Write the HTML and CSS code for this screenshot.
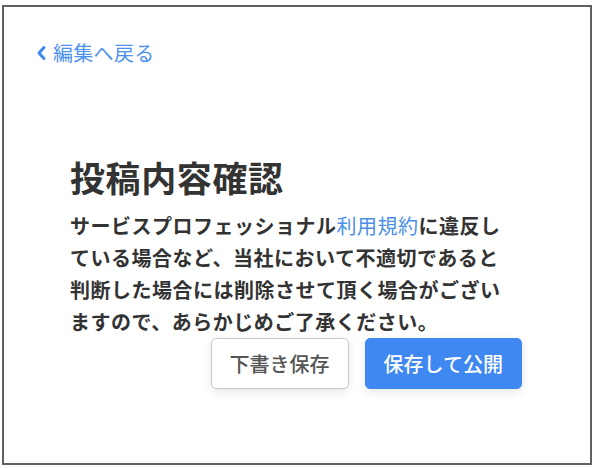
FILE: index.html
```html
<!DOCTYPE html>
<html lang="ja">
<head>
<meta charset="utf-8">
<link rel="stylesheet" href="styles.css">
</head>
<body>
<div class="frame">
  <a class="back" href="#">
    <svg class="chev" width="11" height="16" viewBox="0 0 11 16"><polyline points="8,2.5 3,8 8,13.5" fill="none" stroke="#3f86ee" stroke-width="3" stroke-linecap="round" stroke-linejoin="round"/></svg>
    <span>編集へ戻る</span>
  </a>
  <div class="content">
    <h1 class="title">投稿内容確認</h1>
    <p class="desc">サービスプロフェッショナル<a class="link" href="#">利用規約</a>に違反している場合など、当社において不適切であると判断した場合には削除させて頂く場合がございますので、あらかじめご了承ください。</p>
    <div class="actions">
      <button class="btn btn-draft">下書き保存</button>
      <button class="btn btn-publish">保存して公開</button>
    </div>
  </div>
</div>
</body>
</html>
```
FILE: styles.css
```css
html, body {
  margin: 0;
  padding: 0;
  background: #fff;
}
body {
  font-family: "Noto Sans CJK JP", "Noto Sans", sans-serif;
}
.frame {
  box-sizing: border-box;
  margin: 5px 0 0 2px;
  width: 590px;
  height: 460px;
  border: 2px solid #606060;
  padding: 32px 0 0 32px;
}
.back {
  display: inline-flex;
  align-items: center;
  gap: 6px;
  color: #4d92f0;
  text-decoration: none;
  font-size: 20px;
  line-height: 28px;
  letter-spacing: 0.3px;
}
.chev {
  display: block;
}
.content {
  width: 452px;
  margin: 88px 0 0 34px;
}
.title {
  margin: 0;
  font-size: 35px;
  line-height: 44px;
  font-weight: 700;
  color: #333;
  letter-spacing: 0.6px;
}
.desc {
  margin: 11px 0 0;
  width: 440px;
  font-size: 20px;
  line-height: 32px;
  font-weight: 700;
  color: #333;
  letter-spacing: 0.5px;
}
.link {
  color: #4a90e8;
  font-weight: 400;
  text-decoration: none;
}
.actions {
  display: flex;
  justify-content: flex-end;
  gap: 16px;
}
.btn {
  box-sizing: border-box;
  height: 51px;
  padding: 0 18px;
  font-family: "Noto Sans CJK JP", "Noto Sans", sans-serif;
  font-size: 20px;
  font-weight: 500;
  border-radius: 5px;
  box-shadow: 0 3px 10px rgba(0, 0, 0, 0.1);
  cursor: pointer;
}
.btn-draft {
  background: #fff;
  color: #555;
  border: 1px solid #c8c8c8;
}
.btn-publish {
  background: #3f88f2;
  color: #fff;
  border: 1px solid #3f88f2;
}
```
